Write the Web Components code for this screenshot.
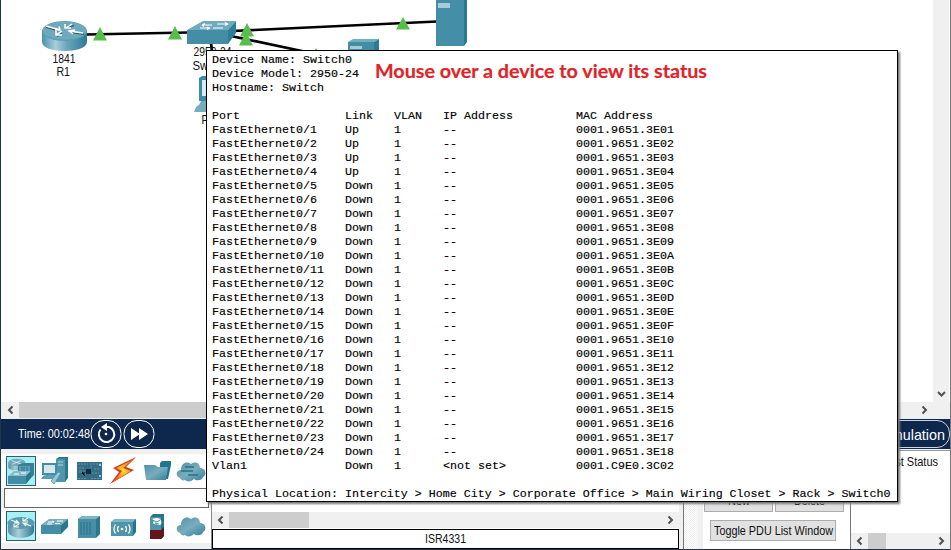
<!DOCTYPE html>
<html lang="en"><head><meta charset="utf-8"><title>Network workspace</title>
<style>html,body{margin:0;width:951px;height:550px;overflow:hidden;background:#fff;font-family:"Liberation Sans",Arial,sans-serif;font-size:12.500px;color:#111}</style></head>
<body><network-app></network-app>
<script>
const define=(name,html,setup)=>customElements.define(name,class extends HTMLElement{
 constructor(){super();const t=document.createElement('template');t.innerHTML=html;this.attachShadow({mode:'open'}).append(t.content.cloneNode(true));}
 connectedCallback(){if(setup)setup(this,this.shadowRoot);}
});

/* Text condensed or widened to occupy a given width */
define('fit-text','<style>:host{display:inline-block;white-space:nowrap;text-align:left}span{display:inline-block;transform-origin:0 50%}</style><span></span>',(el,r)=>{
 const s=r.querySelector('span');s.textContent=el.getAttribute('text');
 const w=+el.getAttribute('w'),n=s.getBoundingClientRect().width;
 s.style.transform=`scaleX(${w/n})`;s.style.marginRight=(w-n)+'px';
});

define('scroll-bar',`<style>:host{display:flex;height:16px;background:#f0f0f0;align-items:center;overflow:hidden}
svg{flex:none;width:17px;height:16px;fill:none;stroke:#505050;stroke-width:2}i{height:100%;background:#cdcdcd;flex:none}b{flex:1}
:host([vertical]){flex-direction:column;width:16px;height:auto}:host([vertical]) .l,:host([vertical]) i{display:none}:host([vertical]) .r{transform:rotate(90deg)}</style>
<svg class="l" viewBox="0 0 17 16"><path d="M10.500 4.500L7 8l3.500 3.500"/></svg><i></i><b></b><svg class="r" viewBox="0 0 17 16"><path d="M6.500 4.500L10 8l-3.500 3.500"/></svg>`,
(el,r)=>{r.querySelector('i').style.width=(el.getAttribute('thumb')||0)+'px';});

define('topology-canvas',`<style>:host{display:block;background:#fff;min-width:0}svg{display:block}text{font-size:12.500px;fill:#111}</style>
<svg width="932" height="402" viewBox="0 0 932 402">
<defs><linearGradient id="g"><stop stop-color="#4b92ab"/><stop offset=".3" stop-color="#a9cfdb"/><stop offset=".55" stop-color="#6aa6ba"/><stop offset="1" stop-color="#2b7c96"/></linearGradient></defs>
<g stroke="#000" stroke-width="2.700"><path d="M86 34.500L188 32.500M233 31L437 21.500M231 36L330 57M211 43L213 60"/></g>
<path fill="url(#g)" d="M42 31v11c0 12 45 12 45 0V31z"/><ellipse cx="64.500" cy="31" rx="22.500" ry="10" fill="#5c9eb4"/>
<ellipse cx="64.500" cy="30.500" rx="21.500" ry="9" fill="#70a9bb"/>
<g stroke="#276477" stroke-width="1.400" fill="none" transform="translate(0 1.300)"><path d="M46 26l7 2 5 1.500M84 33l-7-1-7-1M67 27l7-3M57 35l5-3"/></g>
<g stroke="#fff" stroke-width="1.500" fill="none"><path d="M46 26l7 2 6 1.500M55 30h5l-1-3.500M83 33l-7-1-7-1M73 34l-4-3 6-1M66 28l6-4M65 24v4h6M62 31l-6 4M56 31v4h6"/></g>
<path fill="#58bd4b" d="M100 27l7 13.500H93zM175 26l7 13.500h-14z"/>
<path fill="#6faabd" d="M187 30l16-9h33l-8 9z"/><path fill="#2c7f98" d="M228 30l8-9v12l-8 11z"/><path fill="#438da7" d="M187 30h41v14h-41z"/>
<g stroke="#fff" stroke-width="1.200" fill="none"><path d="M202 25h10M202 25l3-1.500M202 25l2 1.500M217 24h11l-3-1.500m3 1.500-3 1.500M200 28h10l-3-1m3 1-3 1.500M213 28h10"/></g>
<path fill="#58bd4b" d="M247 23l7 13.500h-14zM246 32l7 13.500h-14zM403 17l7 12.500h-14zM316 48l7 12h-14z"/>
<path fill="#448ea8" d="M436 0h28v46h-28z"/><path fill="#287992" d="M464 0h3v42l-3 4z"/><path fill="#a6ccda" d="M438 3h12v5h-12z"/>
<path fill="#73aebf" d="M348 42l5-3h26l-5 3z"/><path fill="#438da7" d="M348 42h26v20h-26z"/><path fill="#297c95" d="M374 42l5-3v20h-5z"/><path fill="#a6ccda" d="M350 46h12v3h-12z"/>
<path fill="#3d8ba4" d="M199 78l3-2h20v25h-23z"/><path fill="#d9eaf0" d="M202 80h20v16h-20z"/><path fill="#73aebf" d="M201 101h16v4h-18zM196 107l4-3h24v8h-30z"/>
<g lengthAdjust="spacingAndGlyphs"><text x="52.500" y="63" textLength="23" lengthAdjust="spacingAndGlyphs">1841</text><text x="56.500" y="76" textLength="13.500" lengthAdjust="spacingAndGlyphs">R1</text><text x="193.500" y="56" textLength="38" lengthAdjust="spacingAndGlyphs">2950-24</text><text x="192.500" y="69.500" textLength="40" lengthAdjust="spacingAndGlyphs">Switch0</text><text x="201.500" y="124" textLength="20" lengthAdjust="spacingAndGlyphs">PC0</text></g></svg>`);

define('time-bar',`<style>:host{display:flex;align-items:center;background:#0d274d;color:#fff;height:30px;box-sizing:border-box;padding-left:17px}
svg{flex:none}.sim{margin-left:auto;box-sizing:border-box;width:93px;height:28px;border:1px solid #cbd4e0;border-radius:13px;display:flex;align-items:center;justify-content:flex-end;padding-right:4px;font-size:15px}</style>
<fit-text text="Time: 00:02:48" w="72"></fit-text>
<svg width="66" height="30" fill="none" stroke="#fff"><rect x="1" y="1.500" width="30" height="27" rx="13"/><rect x="34" y="1.500" width="30" height="27" rx="13"/><path stroke-width="2" d="M10.500 10.500a7.700 7.700 0 1 0 8.500-2.500h-4"/><path fill="#fff" stroke="none" d="M11 8l6-4v8z"/><circle cx="16" cy="15" r="1.300" fill="#fff" stroke="none"/><path fill="#fff" stroke="none" d="M41 9l9 6-9 6zM49 9l9 6-9 6z"/></svg>
<div class="sim"><fit-text text="Simulation" w="67"></fit-text></div>`);

const art={
 router:'<path d="M2 12v8c0 9 26 9 26 0v-8z" fill="url(#g)"/><ellipse cx="15" cy="12" rx="13.500" ry="6" fill="#579bb1"/><path d="M5 9l8 3m-3-3 3 3H8M25 15l-8-3m3 3-3-3h5M17 10l5-3m-5 0v3h5M13 13l-5 3m0-3v3h5" stroke="#fff" stroke-width="1.100" fill="none"/>',
 sw:'<path d="M1 14l8-6h19l-7 6z" fill="#78afc0"/><path d="M1 14h20v9H1z" fill="#438da7"/><path d="M21 14l7-6v8l-7 7z" fill="#28768e"/><path d="M8 11h6l-2-1m5 0h6M7 13h5m3-.500h5" stroke="#fff" fill="none"/>',
 net:'<g transform="translate(1 1) scale(.65 .6)"><path d="M2 9v8c0 7 26 7 26 0V9z" fill="url(#g)"/><ellipse cx="15" cy="9" rx="13" ry="6" fill="#70a9bb"/><path d="M7 6l15 6M22 6L8 12" stroke="#fff"/></g><path d="M12 9l5-2h11v12l-3 3H12z" fill="#368198"/><path d="M13 10h11v12H13z" fill="#5c9eb3"/><path d="M16 11v10m2-10v10m3-10v10" stroke="#2b768c"/><path d="M2 20l6-5h17l-5 5z" fill="#8abcca"/><path d="M2 20h18v8H2z" fill="#438da7"/><path d="M20 20l5-5v7l-5 6z" fill="#28768e"/><path d="M8 18h5m2-1h5" stroke="#fff"/>',
 pc:'<path d="M16 3l3-2h9v21l-3 4h-9z" fill="#287891"/><path d="M16 3h9v23h-9z" fill="#5195aa"/><path d="M18 6h5m-5 3h5" stroke="#b6d7e1"/><path d="M2 7h15v12H2z" fill="#438da7"/><path d="M4 9h11v8H4z" fill="#d5e7ec"/><path d="M6 19h9l2 4H1l2-3z" fill="#5c9eb3"/><path d="M11 25l7-9 3 1-7 11z" fill="#9ac8d8" stroke="#4a8ea7" stroke-width=".7"/>',
 board:'<path d="M3 6h25v18H3z" fill="#326d88"/><path d="M4 8h10M16 8h11M4 22.500h9m4 0h10M5 12h5m10 1h5M6 16h5v4m7-3h7M17 10v4" stroke="#7399a7" stroke-dasharray="2 1" stroke-width=".8"/><path d="M12 13h5v5h-5z" fill="#142d3d"/><path d="M5 14h3v3H5z" fill="#45809a"/><circle cx="26" cy="9" r="1" fill="#d5dfe2"/><circle cx="26" cy="20" r="1" fill="#d5dfe2"/>',
 bolt:'<path d="M28 1L5 12l6 4-9 12 24-14-8-3z" fill="#cf3f28"/><path d="M26 3L8 12l6 3-9 11 18-11-8-3z" fill="url(#fire)"/>',
 folder:'<path d="M18 7l2-2h9v4l-3 14h-8z" fill="#21758e"/><path d="M2 9h11l3 2h10l-2 13H4z" fill="url(#fold)"/>',
 cloud:'<g fill="url(#fold)"><path d="M4 22c-5-2-4-8 1-8 0-8 7-9 10-6 4-3 9-1 9 4 6 0 7 7 3 9-1 4-7 4-9 2-3 3-7 3-9 1-2 1-4 0-5-2z"/></g>',
 server:'<path d="M4 8l4-3h18v18l-4 4H4z" fill="#2b7890"/><path d="M4 8h18v19H4z" fill="#478fa6"/><path d="M4 8l4-3h18l-4 3z" fill="#82b5c4"/><path d="M7 11v13m3-13v13m3-13v13m3-13v13" stroke="#26718a"/>',
 wireless:'<path d="M3 11l4-3h21v13l-3 4H3z" fill="#27738b"/><path d="M3 11h22v14H3z" fill="#4e94aa"/><path d="M3 11l4-3h21l-3 3z" fill="#80b4c4"/><circle cx="14" cy="18" r="1.300" fill="#fff"/><path d="M10.500 15q-2 3 0 6m7-6q2 3 0 6M7.500 13.500q-3 4.500 0 9m13-9q3 4.500 0 9" fill="none" stroke="#fff" stroke-width="1.300"/>',
 fire:'<path d="M8 6l3-3h11v22l-3 3H8z" fill="#28758b"/><path d="M8 6h11v22H8z" fill="#5096ab"/><path d="M8 19h11l3-3v9l-3 3H8z" fill="#65141b"/><path d="M10 8q8-3 9 2c2 4-3 5-4 3-4 1-5-2-3-3z" fill="#fff"/><path d="M10 9l5 2 3-2m-5 3 4 1" stroke="#438da7" fill="none"/>'
};
define('device-icon',`<style>:host{display:block;flex:none;width:30px;height:30px;box-sizing:border-box}:host([selected]){background:#a5f1f6;outline:1px solid #315e69;outline-offset:-1px}svg{display:block}</style><svg width="30" height="30" viewBox="0 0 30 30"></svg>`,(el,r)=>{
 const k=el.getAttribute('kind');
 r.querySelector('svg').innerHTML='<defs><linearGradient id="g"><stop stop-color="#578fa2"/><stop offset=".4" stop-color="#a9cdd7"/><stop offset="1" stop-color="#2f7b92"/></linearGradient><radialGradient id="fire"><stop stop-color="#ffe52d"/><stop offset="1" stop-color="#ed6321"/></radialGradient><linearGradient id="fold" x1="0" y1="0" x2="1" y2="1"><stop stop-color="#4d91a8"/><stop offset=".5" stop-color="#79adbd"/><stop offset="1" stop-color="#327e97"/></linearGradient></defs>'+art[k==='lines'?'cloud':k]+(k==='lines'?'<path d="M9 11h9m-13 4h12m-5 4h10" stroke="#25728a" stroke-width="1.500"/>':'');
});
define('device-palette',`<style>:host{display:block;background:#f0f0f0;padding-top:4px;box-sizing:border-box}.row{height:34px;display:flex;gap:4.100px;padding:2px 0 2px 5px;box-sizing:border-box;background:#fff;overflow:hidden}.field{height:20px;border:1px solid #666;background:#fff;margin:0 2px 0 3px;box-sizing:border-box}.row.second{height:35px;padding-top:3px}</style>
<div class="row"><device-icon kind="net" selected></device-icon><device-icon kind="pc"></device-icon><device-icon kind="board"></device-icon><device-icon kind="bolt"></device-icon><device-icon kind="folder"></device-icon><device-icon kind="lines"></device-icon></div><div class="field"></div><div class="row second"><device-icon kind="router" selected></device-icon><device-icon kind="sw"></device-icon><device-icon kind="server"></device-icon><device-icon kind="wireless"></device-icon><device-icon kind="fire"></device-icon><device-icon kind="cloud"></device-icon></div>`);

define('model-list',`<style>:host{display:flex;flex-direction:column;justify-content:flex-end;background:#fff;border-left:1px solid #888;box-sizing:border-box}.name{height:20px;box-sizing:border-box;border:1px solid #000;text-align:center;line-height:19px;margin-top:1px}</style><scroll-bar thumb="80"></scroll-bar><div class="name"><fit-text text="ISR4331" w="41"></fit-text></div>`);
define('push-button',`<style>:host{display:flex;align-items:center;justify-content:center;background:#e1e1e1;border:1px solid #adadad;box-sizing:border-box;height:21px}</style><slot></slot>`);
define('pdu-controls',`<style>:host{display:flex;flex-direction:column;justify-content:flex-end;background:#fff;border-left:5px solid #f0f0f0;box-sizing:border-box;padding:0 6px 8px 1px}.pair{display:flex;gap:2px}.pair push-button{width:69px;height:22px}.last{width:126px;height:21px;margin:8px 0 0 6px}</style>
<div class="pair"><push-button><fit-text text="New" w="22"></fit-text></push-button><push-button><fit-text text="Delete" w="31"></fit-text></push-button></div><push-button class="last"><fit-text text="Toggle PDU List Window" w="119"></fit-text></push-button>`);
define('status-list',`<style>:host{display:flex;flex-direction:column;justify-content:space-between;background:#fff;border-left:1px solid #777;border-top:1px solid #999;box-sizing:border-box}.h{padding:4px 12px 0 0;text-align:right}</style><div class="h"><fit-text text="Last Status" w="55"></fit-text></div><scroll-bar thumb="18"></scroll-bar>`);

define('port-table',`<style>:host{display:block}.r{display:grid;grid-template-columns:133px 49px 49px 133px 1fr;height:14px;white-space:pre}</style>`,(el,r)=>{
 const rows=[['Port','Link','VLAN','IP Address','MAC Address']];
 const tail=i=>i<16?'0'+i.toString(16).toUpperCase():String(i-6);
 for(let i=1;i<=24;i++){
  /* Ports 16 to 24 end in hexadecimal 10 to 18 */
  rows.push(['FastEthernet0/'+i,i<5?'Up':'Down','1','--','0001.9651.3E'+tail(i)]);
 }
 rows.push(['Vlan1','Down','1','<not set>','0001.C9E0.3C02']);
 rows.forEach(row=>{const d=document.createElement('div');d.className='r';row.forEach(x=>{const s=document.createElement('span');s.textContent=x;d.append(s)});r.append(d)});
});
define('status-tooltip',`<style>:host{display:block;box-sizing:border-box;width:692px;height:452px;border:1px solid #000;background:#fff;padding:2px 0 0 5px;font:11.670px/14px "Liberation Mono",monospace;color:#000;-webkit-text-stroke:.15px #000;box-shadow:2px 2px 2px #777}
.top{display:flex;height:56px}.meta{width:163px;white-space:pre}.call{font:bold 18.500px/28px Lato,sans-serif;color:#df2429;-webkit-text-stroke:.2px #df2429;padding-top:4px}.loc{margin-top:14px;white-space:pre}</style>
<div class="top"><div class="meta">Device Name: Switch0
Device Model: 2950-24
Hostname: Switch</div><div class="call"><fit-text text="Mouse over a device to view its status" w="332"></fit-text></div></div><port-table></port-table><div class="loc">Physical Location: Intercity &gt; Home City &gt; Corporate Office &gt; Main Wiring Closet &gt; Rack &gt; Switch0</div>`);

define('network-app',`<style>:host{display:block;position:relative;width:951px;height:550px;overflow:hidden;box-sizing:border-box;border-left:1px solid #20364d;border-right:1px solid #777}
.work{display:grid;grid-template-columns:932px 17px;height:402px}topology-canvas{margin-left:-1px;width:932px}.hs{width:931px}.line{display:flex;background:#f0f0f0;height:17px;padding-left:1px}.rule{height:1px;background:#eee}.panels{display:grid;grid-template-columns:210px 468px 5px 14px 152px 100px;height:100px;border-bottom:1px solid #20364d;box-sizing:border-box}.split{background:#f0f0f0;border-right:1px solid #777}.grip{background:repeating-conic-gradient(#fff 0 25%,#eee 0 50%) 0 0/2px 2px}status-tooltip{position:absolute;left:205px;top:50px}</style>
<div class="work"><topology-canvas></topology-canvas><scroll-bar vertical></scroll-bar></div><div class="line"><scroll-bar class="hs" thumb="760"></scroll-bar></div><time-bar></time-bar><div class="rule"></div>
<div class="panels"><device-palette></device-palette><model-list></model-list><div class="split"></div><div class="grip"></div><pdu-controls></pdu-controls><status-list></status-list></div><status-tooltip></status-tooltip>`);
</script></body></html>
